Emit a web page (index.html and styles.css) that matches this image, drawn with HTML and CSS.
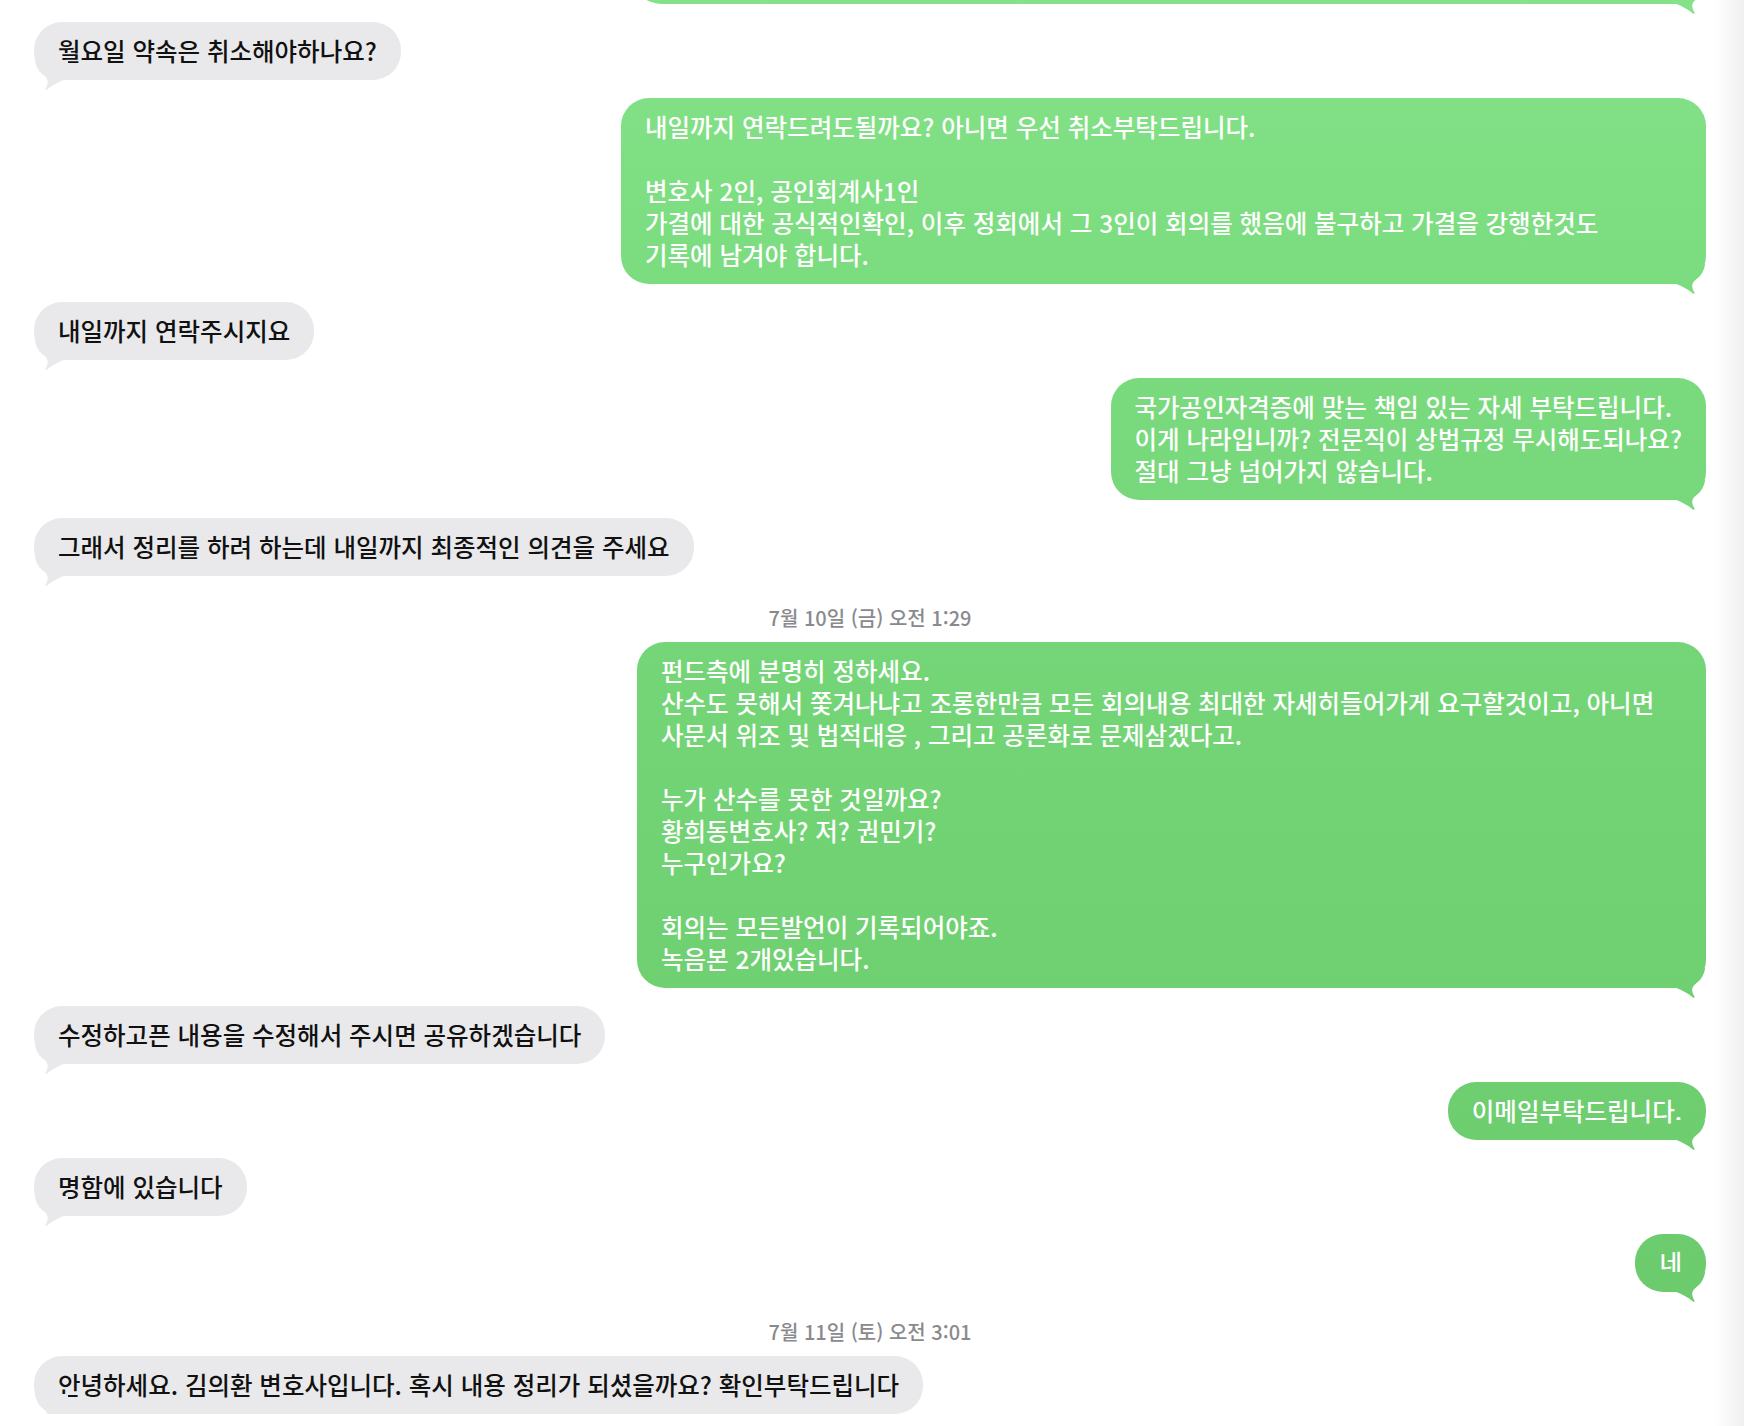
FILE: index.html
```html
<!DOCTYPE html>
<html lang="ko">
<head>
<meta charset="utf-8">
<title>메시지</title>
<link rel="stylesheet" href="styles.css">
</head>
<body>
<main class="chat">
  <div class="bubble out out-cut" aria-hidden="true"></div>

  <div class="bubble in">월요일 약속은 취소해야하나요?</div>

  <div class="bubble out out-wide-a">내일까지 연락드려도될까요? 아니면 우선 취소부탁드립니다.<br><br>변호사 2인, 공인회계사1인<br>가결에 대한 공식적인확인, 이후 정회에서 그 3인이 회의를 했음에 불구하고 가결을 강행한것도<br>기록에 남겨야 합니다.</div>

  <div class="bubble in">내일까지 연락주시지요</div>

  <div class="bubble out">국가공인자격증에 맞는 책임 있는 자세 부탁드립니다.<br>이게 나라입니까? 전문직이 상법규정 무시해도되나요?<br>절대 그냥 넘어가지 않습니다.</div>

  <div class="bubble in">그래서 정리를 하려 하는데 내일까지 최종적인 의견을 주세요</div>

  <div class="stamp">7월 10일 (금) 오전 1:29</div>

  <div class="bubble out out-wide-b">펀드측에 분명히 정하세요.<br>산수도 못해서 쫓겨나냐고 조롱한만큼 모든 회의내용 최대한 자세히들어가게 요구할것이고, 아니면<br>사문서 위조 및 법적대응 , 그리고 공론화로 문제삼겠다고.<br><br>누가 산수를 못한 것일까요?<br>황희동변호사? 저? 권민기?<br>누구인가요?<br><br>회의는 모든발언이 기록되어야죠.<br>녹음본 2개있습니다.</div>

  <div class="bubble in">수정하고픈 내용을 수정해서 주시면 공유하겠습니다</div>

  <div class="bubble out">이메일부탁드립니다.</div>

  <div class="bubble in">명함에 있습니다</div>

  <div class="bubble out">네</div>

  <div class="stamp stamp-late">7월 11일 (토) 오전 3:01</div>

  <div class="bubble in">안녕하세요. 김의환 변호사입니다. 혹시 내용 정리가 되셨을까요? 확인부탁드립니다</div>
</main>
</body>
</html>
```

FILE: styles.css
```css
html {
  overflow: hidden;
  background: linear-gradient(90deg, #ffffff 0, #ffffff 1714px, #f0f0f0 1744px);
  min-height: 100%;
}

body {
  margin: 0;
  font-family: "Noto Sans CJK KR", "Noto Sans", sans-serif;
  -webkit-font-smoothing: antialiased;
}

.chat {
  display: flex;
  flex-direction: column;
  gap: 18px;
  padding: 0 38px 0 34px;
}

.bubble {
  position: relative;
  box-sizing: border-box;
  padding: 13px 24px;
  border-radius: 28px;
  font-size: 24.5px;
  font-weight: 500;
  line-height: 32px;
  white-space: nowrap;
}

.bubble::after {
  content: "";
  position: absolute;
  bottom: -10px;
  width: 34px;
  height: 30px;
  background: inherit;
}

.in {
  align-self: flex-start;
  background: #e9e9eb;
  color: #111111;
}

.in::after {
  left: 0;
  clip-path: path("M34 0 L34 20 L30 20 C24 22 17 26 13 29.5 Q11 30.5 11.5 28.5 C14.5 24 15 19 10 15.5 C5 12 1.5 6 1 0 Z");
}

.out {
  align-self: flex-end;
  background: linear-gradient(180deg, #84e388 0, #7bdb7f 300px, #72d375 800px, #69c96b 1426px) fixed;
  color: #ffffff;
}

.out::after {
  right: 0;
  clip-path: path("M0 0 L0 20 L4 20 C10 22 17 26 21 29.5 Q23 30.5 22.5 28.5 C19.5 24 19 19 24 15.5 C29 12 32.5 6 33 0 Z");
}

.out-cut {
  width: 1073px;
  height: 58px;
  margin-top: -54px;
}

.out-wide-a {
  width: 1085px;
}

.out-wide-b {
  width: 1069px;
}

.stamp {
  align-self: center;
  padding-top: 12px;
  margin-bottom: -6px;
  font-size: 20px;
  line-height: 24px;
  font-weight: 500;
  color: #8a8a8e;
}

.stamp-late {
  padding-top: 10px;
}
```
